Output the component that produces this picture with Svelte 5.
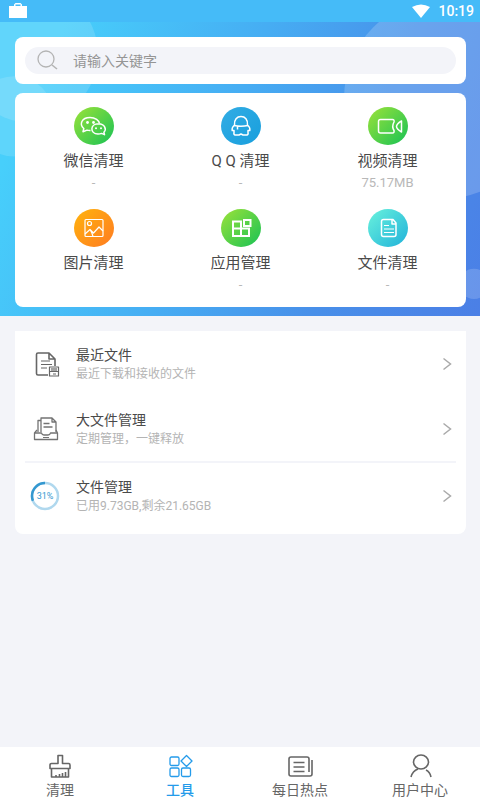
<script lang="ts">
	interface Tool {
		id: string;
		label: string;
		size: string;
	}

	const tools: Tool[] = [
		{ id: 'wechat', label: '微信清理', size: '-' },
		{ id: 'qq', label: 'Q Q 清理', size: '-' },
		{ id: 'video', label: '视频清理', size: '75.17MB' },
		{ id: 'image', label: '图片清理', size: '' },
		{ id: 'apps', label: '应用管理', size: '-' },
		{ id: 'doc', label: '文件清理', size: '-' }
	];

	const rows = [
		{ id: 'recent', title: '最近文件', note: '最近下载和接收的文件' },
		{ id: 'large', title: '大文件管理', note: '定期管理，一键释放' },
		{ id: 'storage', title: '文件管理', note: '已用9.73GB,剩余21.65GB' }
	];

	const tabs = [
		{ id: 'clean', label: '清理' },
		{ id: 'tools', label: '工具' },
		{ id: 'news', label: '每日热点' },
		{ id: 'user', label: '用户中心' }
	];

	const usedPercent = 31;

	let query = $state('');
	let activeTab = $state('tools');
</script>

<div class="screen">
	<header class="status-bar">
		<svg width="18" height="16" viewBox="0 0 18 16" aria-hidden="true">
			<path d="M0 3h5V1.500L6.500 0h5L13 1.500V3h5v12H0zM6.500 3h5V1.500h-5z" fill="#fff" fill-rule="evenodd" />
		</svg>
		<div class="status-right">
			<svg width="18" height="14" viewBox="0 0 18 14" aria-hidden="true">
				<path d="M0 3Q9-2 18 3L9 14z" fill="#fff" />
			</svg>
			<time>10:19</time>
		</div>
	</header>

	<section class="hero">
		<svg class="hero-art" viewBox="0 0 480 293" preserveAspectRatio="none" aria-hidden="true">
			<g fill="#fff">
				<circle cx="30" cy="32" r="68" opacity="0.14" />
				<circle cx="14" cy="94" r="40" opacity="0.13" />
				<circle cx="444" cy="76" r="100" opacity="0.18" />
				<circle cx="474" cy="261" r="15" opacity="0.17" />
			</g>
		</svg>

		<div class="card search-card">
			<label class="search">
				<svg width="22" height="22" viewBox="0 0 22 22" fill="none" stroke="#b4b4b4" aria-hidden="true">
					<circle cx="10" cy="9" r="8" stroke-width="1.300" />
					<path d="M16 15l5 4" stroke-width="1.600" />
				</svg>
				<input type="text" placeholder="请输入关键字" aria-label="请输入关键字" bind:value={query} />
			</label>
		</div>

		<div class="card tool-grid">
			{#each tools as tool (tool.id)}
				<button class="tool" type="button">
					<span class="badge {tool.id}">
						<svg width="40" height="38" viewBox="0 0 40 38" fill="none" stroke="#fff" stroke-width="1.500" stroke-linejoin="round" aria-hidden="true">
							{#if tool.id === 'wechat'}
								<path d="M16.500 23.500q-2 .1-3.500-.4l-4 1.600.8-3.200C5 17.500 7.500 10.500 16 10.500c5.500 0 9 3 9.500 6" />
								<path d="M24.500 16.700c-8.500 0-9 9.800-.5 10.300 1.500 0 2.500-.2 3.500-.6l3 1.200-.6-2.400c3-3 .8-8.500-5.400-8.500z" />
								<g fill="#fff" stroke="none">
									<circle cx="13.500" cy="15.500" r="1.400" />
									<circle cx="19.500" cy="15.500" r="1.400" />
									<circle cx="22" cy="21.300" r="1" />
									<circle cx="27" cy="21.300" r="1" />
								</g>
							{:else if tool.id === 'qq'}
								<path d="M13.500 18C13 12.500 16 9.500 20 9.500s7 3 6.500 8.500c1.800 1.500 2.700 3.500 2.300 5.500L27 23.500v2q.5 2-1 2.500h-4L20 27l-2 1h-4q-1.500-.5-1-2.500v-2l-1.800 0c-.4-2 .5-4 2.300-5.500z" />
								<path d="M13 18.500q7 1.500 14 0M16.500 19v3.500" />
							{:else if tool.id === 'video'}
								<path d="M24.500 12.500H12.500a2 2 0 0 0-2 2v9.500a2 2 0 0 0 2 2h12q2 0 1.500-2.500-2.500-4 0-8.500.5-2.500-1.500-2.500z" />
								<path d="M33.500 14v11q-5-3-5-5.500t5-5.500z" />
							{:else if tool.id === 'image'}
								<g stroke-width="1.200">
									<rect x="11" y="10.500" width="18" height="17" rx="1" />
									<circle cx="15.500" cy="14.500" r="2" />
									<path d="M11 25l5-4.500 3.500 3.500 5.500-6 4 4M19 27.500q-1-4-3-7" />
								</g>
							{:else if tool.id === 'apps'}
								<g stroke-width="2" stroke-linejoin="miter">
									<path d="M12 12.500h8v14.500h-8zM12 19.500h16v7.500H12z" />
									<path d="M23 11h6.500v6H23z" />
								</g>
							{:else}
								<path d="M25 10.500H15.500a2 2 0 0 0-2 2v13a2 2 0 0 0 2 2h10.500a2 2 0 0 0 2-2V14zM24 10.500v4.500h4" />
								<path d="M16 16.500h5M16 20h10M16 23.500h10" stroke-width="1.200" />
							{/if}
						</svg>
					</span>
					<span class="tool-label">{tool.label}</span>
					<span class="tool-size">{tool.size}</span>
				</button>
			{/each}
		</div>
	</section>

	<main>
		<ul class="list">
			{#each rows as row (row.id)}
				<li class:divided={row.id === 'storage'}>
					<button class="row" type="button">
						{#if row.id === 'storage'}
							<svg class="row-icon" width="32" height="30" viewBox="0 0 32 30" aria-hidden="true">
								<circle cx="16" cy="15" r="13" fill="none" stroke="#b0d8ee" stroke-width="2.500" />
								<circle
									cx="16"
									cy="15"
									r="13"
									fill="none"
									stroke="#3498d0"
									stroke-width="2.500"
									pathLength="100"
									stroke-dasharray="{usedPercent} 100"
									transform="rotate(-90 16 15) translate(0 30) scale(1 -1)"
								/>
								<text x="16" y="18" text-anchor="middle">{usedPercent}%</text>
							</svg>
						{:else if row.id === 'recent'}
							<svg class="row-icon" width="32" height="30" viewBox="0 0 32 30" fill="none" stroke="#666" stroke-width="1.600" stroke-linejoin="round" aria-hidden="true">
								<path d="M19 26H9a1.500 1.500 0 0 1-1.500-1.500V5.500A1.500 1.500 0 0 1 9 4H20l6 6v7M20 4v6h6" />
								<path d="M12 12h9M12 15.500h11M12 19h6" stroke-width="1.200" />
								<path d="M20.500 18h9v9h-9zM20.500 22.500h9M23 19v3M25 19v3M27 19v3M24 25h3" stroke-width="1.200" />
							</svg>
						{:else}
							<svg class="row-icon" width="32" height="30" viewBox="0 0 32 30" fill="none" stroke="#737373" stroke-width="1.300" stroke-linejoin="round" aria-hidden="true">
								<path d="M9 18V6.500h3M12 18V4h11l4 4v10M23 4v4h4" />
								<path d="M14.500 9.500h6M14.500 13h9" />
								<path d="M8 16l-2.500 3v6.500h23V19L27 16M5.500 19h7q.5 2 2.500 2h4q2 0 2.500-2h7" />
								<path d="M14 23.500h6" stroke-width="1" />
							</svg>
						{/if}
						<span class="row-text">
							<span class="row-title">{row.title}</span>
							<span class="row-note">{row.note}</span>
						</span>
						<svg width="10" height="14" viewBox="0 0 10 14" fill="none" stroke="#aaa" stroke-width="1.500" aria-hidden="true">
							<path d="M1.500 1.500L8.500 7l-7 5.500" />
						</svg>
					</button>
				</li>
			{/each}
		</ul>
	</main>

	<nav class="tab-bar">
		{#each tabs as tab (tab.id)}
			<button class="tab" class:active={tab.id === activeTab} type="button" onclick={() => (activeTab = tab.id)}>
				<svg width="26" height="24" viewBox="0 0 26 24" fill="none" stroke="currentColor" stroke-width="1.600" stroke-linejoin="round" aria-hidden="true">
					{#if tab.id === 'clean'}
						<path d="M11 9.500V1.500h4.500v8h6a1.500 1.500 0 0 1 1.500 1.500v3.500H3V11a1.500 1.500 0 0 1 1.500-1.500zM4.500 14.500v8.500h17v-8.500M9 23v-2M12.500 23v-3M15.500 23v-4M18.500 23v-5" />
					{:else if tab.id === 'tools'}
						<g stroke-width="1.300">
							<rect x="3" y="3" width="9" height="8.500" rx="1.500" />
							<rect x="3" y="14" width="9" height="8.500" rx="1.500" />
							<rect x="14.500" y="14" width="9" height="8.500" rx="1.500" />
							<path d="M19.500 1.500l5.500 5.500-5.500 5.500L14 7z" />
						</g>
					{:else if tab.id === 'news'}
						<path d="M25 6v14a2 2 0 0 1-2 2H4a2 2 0 0 1-2-2V5a2 2 0 0 1 2-2h16a2 2 0 0 1 2 2v13" />
						<path d="M6.500 8.500h11M6.500 13h11M6.500 17.500h11" />
					{:else}
						<ellipse cx="14" cy="8" rx="7.500" ry="7" />
						<path d="M4 23q1.500-6 7-8M24 23q-1-5-5-7" />
					{/if}
				</svg>
				<span>{tab.label}</span>
			</button>
		{/each}
	</nav>
</div>

<style>
	:global(body) {
		background: #f3f4f9;
	}

	.screen {
		display: flex;
		flex-direction: column;
		min-height: 100vh;
		font-family: Roboto, 'Noto Sans CJK SC', sans-serif;
		color: #4a4a4a;
	}

	button {
		border: 0;
		padding: 0;
		background: none;
		color: inherit;
		font: inherit;
		cursor: pointer;
	}

	svg {
		display: block;
		flex: none;
	}

	.status-bar {
		display: flex;
		align-items: center;
		justify-content: space-between;
		height: 22px;
		padding: 0 6px 0 9px;
		background: #45bbf8;
		color: #fff;
	}

	.status-right {
		display: flex;
		align-items: center;
		gap: 8px;
		font-size: 14px;
		font-weight: 500;
		line-height: 22px;
	}

	.hero {
		position: relative;
		display: flex;
		flex-direction: column;
		gap: 9px;
		padding: 15px 14px 9px 15px;
		background: linear-gradient(112deg, #47cffb 10%, #46adf3 45%, #488fe9 72%, #4b7fe6 100%);
	}

	/* Bubbles sit behind the cards. */
	.hero-art {
		position: absolute;
		inset: 0;
		width: 100%;
		height: 100%;
	}

	.card {
		position: relative;
		border-radius: 8px;
		background: #fff;
	}

	.search-card {
		padding: 10px;
	}

	.search {
		display: flex;
		align-items: center;
		gap: 15px;
		height: 27px;
		padding: 0 11px;
		border-radius: 14px;
		background: #f3f4f9;
	}

	.search input {
		flex: 1;
		min-width: 0;
		border: 0;
		padding: 0;
		outline: 0;
		background: none;
		color: #4a4a4a;
		font: inherit;
		font-size: 14px;
	}

	.search input::placeholder {
		color: #959595;
		opacity: 1;
	}

	.tool-grid {
		display: grid;
		grid-template-columns: repeat(3, 1fr);
		row-gap: 4px;
		padding: 14px 5px 0;
	}

	.tool {
		display: flex;
		flex-direction: column;
		align-items: center;
		height: 98px;
	}

	.badge {
		border-radius: 50%;
	}

	.wechat,
	.video,
	.apps {
		background: linear-gradient(135deg, #8fdf3c 10%, #25c552 90%);
	}

	.qq {
		background: linear-gradient(135deg, #32ace4, #189fdd);
	}

	.image {
		background: linear-gradient(135deg, #ffab10 15%, #ff8120 90%);
	}

	.doc {
		background: linear-gradient(135deg, #62ecdc 10%, #27b8da 90%);
	}

	.tool-label {
		margin-top: 5px;
		font-size: 15px;
		line-height: 22px;
		white-space: pre;
	}

	.tool-size {
		font-size: 13px;
		line-height: 22px;
		color: #b8b8b8;
	}

	main {
		flex: 1;
		padding: 15px 14px 15px 15px;
	}

	.list {
		margin: 0;
		padding: 0 10px;
		list-style: none;
		border-radius: 0 0 8px 8px;
		background: #fff;
	}

	.divided {
		padding-bottom: 6px;
		border-top: 2px solid #f3f4f9;
	}

	.row {
		display: flex;
		align-items: center;
		width: 100%;
		height: 65px;
		padding: 0 4px;
		text-align: left;
	}

	.row-icon text {
		font-size: 9px;
		fill: #3498d0;
	}

	.row-text {
		display: flex;
		flex: 1;
		flex-direction: column;
		margin-left: 15px;
		padding-top: 2px;
	}

	.row-title {
		font-size: 14px;
		line-height: 20px;
	}

	.row-note {
		font-size: 12px;
		line-height: 19px;
		color: #b4b4b4;
	}

	.tab-bar {
		display: grid;
		grid-template-columns: repeat(4, 1fr);
		background: #fff;
	}

	.tab {
		display: flex;
		flex-direction: column;
		align-items: center;
		height: 53px;
		padding-top: 7px;
		color: #666;
		font-size: 14px;
		line-height: 24px;
	}

	.active {
		color: #249bea;
		font-weight: 500;
	}
</style>
